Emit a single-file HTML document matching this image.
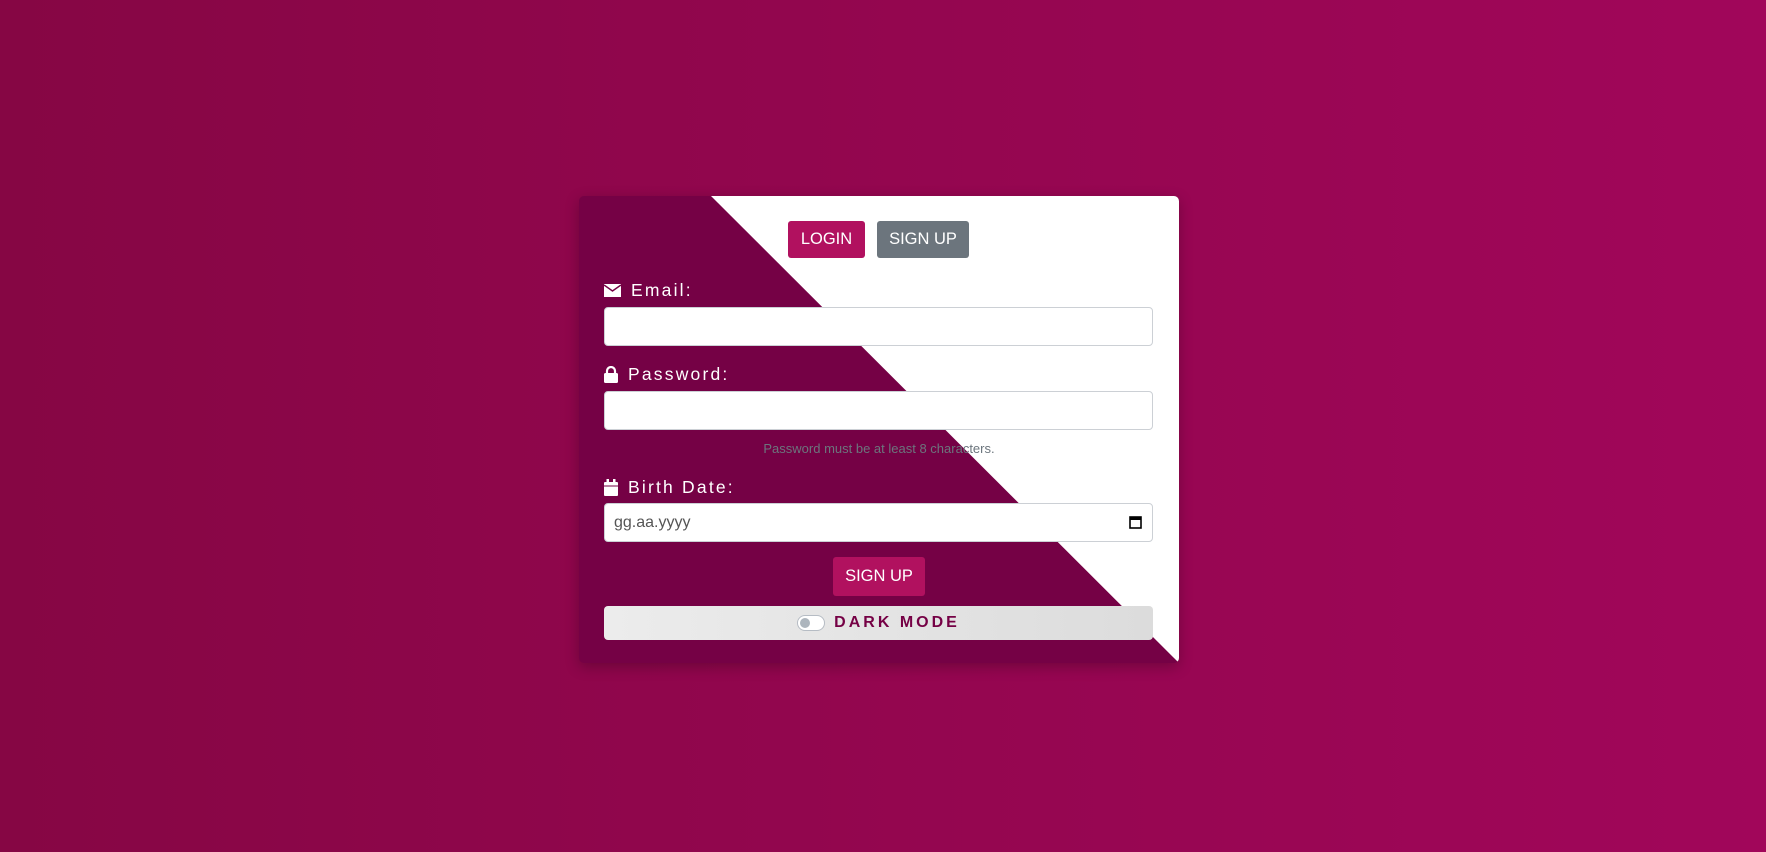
<!DOCTYPE html>
<html><head><meta charset="utf-8"><style>
html,body{margin:0;padding:0;width:1766px;height:852px;overflow:hidden;font-family:"Liberation Sans",Arial,sans-serif}
body{background:linear-gradient(90deg,#860644 0%,#a1065a 100%);position:relative}
.card{position:absolute;left:579px;top:196px;width:600px;height:467px;background:#750145;border-radius:5px;box-shadow:0 4px 14px rgba(0,0,0,.25);overflow:hidden}
.tri{position:absolute;left:0;top:0;width:600px;height:467px;background:#fff;clip-path:polygon(132px 0,600px 0,600px 467px)}
.el{position:absolute}
.btn{position:absolute;color:#fff;font-size:16.5px;border-radius:3px;display:flex;align-items:center;justify-content:center}
.lbl{position:absolute;color:#fff;font-size:17.5px;letter-spacing:2.2px;display:flex;align-items:center}
.lbl svg{margin-right:10px}
.inp{position:absolute;left:25px;width:547px;height:37px;background:#fff;border:1px solid #ccd0d5;border-radius:4px}
</style></head><body>
<div class="card">
<div class="tri"></div>
<div class="btn" style="left:209px;top:25px;width:77px;height:37px;background:#b1115f">LOGIN</div>
<div class="btn" style="left:298px;top:25px;width:92px;height:37px;background:#6c757d">SIGN UP</div>
<div class="lbl" style="left:25px;top:84px"><svg width="17" height="13" viewBox="0 0 17 13"><rect width="17" height="13" fill="#fff"/><path d="M0 1 L8.5 7 L17 1" stroke="#750145" stroke-width="1.5" fill="none"/></svg>Email:</div>
<div class="inp" style="top:111px"></div>
<div class="lbl" style="left:25px;top:168px"><svg width="14" height="17" viewBox="0 0 14 17"><path d="M3 8V5a4 4 0 0 1 8 0v3" stroke="#fff" stroke-width="2.2" fill="none"/><rect x="0" y="7" width="14" height="10" rx="1.5" fill="#fff"/></svg>Password:</div>
<div class="inp" style="top:195px"></div>
<div class="el" style="left:0;width:600px;top:245px;text-align:center;font-size:13px;color:#6c757d">Password must be at least 8 characters.</div>
<div class="lbl" style="left:25px;top:281px"><svg width="14" height="17" viewBox="0 0 14 17"><rect x="0" y="3" width="14" height="14" rx="1" fill="#fff"/><rect x="2.5" y="0" width="2.5" height="4" fill="#fff"/><rect x="9" y="0" width="2.5" height="4" fill="#fff"/><rect x="0" y="6.5" width="14" height="1" fill="#750145"/></svg>Birth Date:</div>
<div class="inp" style="top:307px"><span style="position:absolute;left:9px;top:10px;font-size:16px;color:#555">gg.aa.yyyy</span><svg style="position:absolute;right:10px;top:11px" width="13" height="14" viewBox="0 0 13 14"><rect x="1" y="2" width="11" height="11" fill="none" stroke="#000" stroke-width="1.6"/><rect x="1" y="2" width="11" height="3" fill="#000"/></svg></div>
<div class="btn" style="left:254px;top:361px;width:92px;height:39px;background:#b1115f">SIGN UP</div>
<div class="el" style="left:25px;top:410px;width:549px;height:34px;border-radius:4px;background:linear-gradient(90deg,#ececec,#dcdcdc);display:flex;align-items:center;justify-content:center">
<span style="display:inline-block;width:26px;height:14px;border:1px solid #b6bcc4;border-radius:8px;background:#fff;position:relative;margin-right:9px"><span style="position:absolute;left:2px;top:2px;width:10px;height:10px;border-radius:50%;background:#adb5bd"></span></span>
<span style="color:#750145;font-weight:bold;font-size:16px;letter-spacing:3px">DARK MODE</span></div>
</div>
</body></html>
